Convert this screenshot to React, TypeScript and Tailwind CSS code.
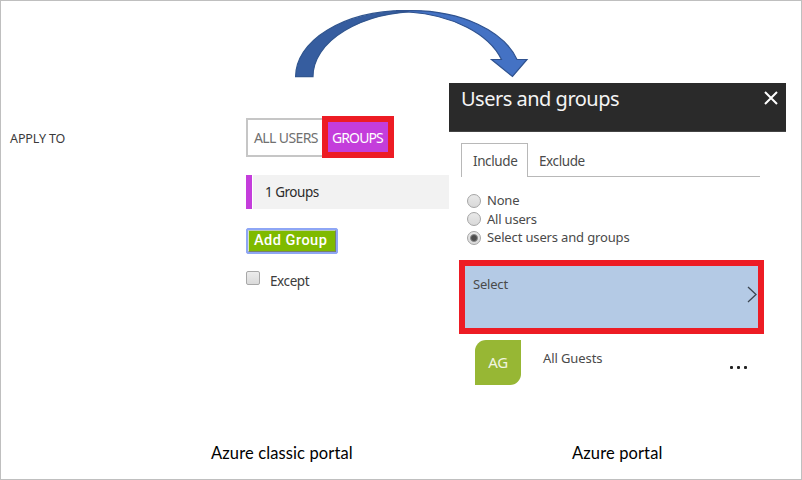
import type { ReactNode } from "react";

function SwoopArrow() {
  return (
    <svg className="block h-[82px] w-full" viewBox="0 0 800 82" fill="none">
      <g transform="translate(-1 -1)" stroke="#2f528f" strokeWidth="1.2">
        <path d="M295.6 76.6A109 66 0 0 1 404.5 10.6L422 11.4A109 65 0 0 0 313 76.6Z" fill="#365d9f" stroke="#31568f" />
        <path d="M396 10.6H412A109 67 0 0 1 517 59.5H527L512.5 76.5L491.5 59.5H501.5A109 67 0 0 0 409 12Z" fill="#4472c4" />
      </g>
    </svg>
  );
}

function Radio({ label, checked, className }: { label: string; checked?: boolean; className: string }) {
  return (
    <div className="flex h-[18.3px] items-center">
      <span className="flex size-[14px] items-center justify-center rounded-full border border-[#a5a5a5] bg-linear-to-b from-[#e9e9e9] to-[#d9d9d9]">
        {checked && <span className="size-[8px] rounded-full border border-[#8a8a8a] bg-[#4d4d4d]" />}
      </span>
      <span className={`ml-[6px] whitespace-nowrap text-[13px] text-[#4a4a4a] ${className}`}>{label}</span>
    </div>
  );
}

function Caption({ children, className }: { children: ReactNode; className: string }) {
  return (
    <div className={`whitespace-nowrap font-['Lato',sans-serif] text-[16.5px] leading-5 text-black ${className}`}>
      {children}
    </div>
  );
}

function ClassicPortal() {
  return (
    <section className="w-[203px] pt-[33px]">
      <div className="flex h-[42px] items-center">
        <div className="flex h-[39px] w-[76px] items-center border-2 border-r-0 border-[#c6c6c6] pl-[6px]">
          <span className="whitespace-nowrap text-[14px] tracking-[-0.6px] text-[#707070]">ALL USERS</span>
        </div>
        <div className="flex h-[42px] w-[72px] items-center border-[6px] border-[#ed1c24] bg-[#c43ddb] pl-[4px]">
          <span className="text-[14px] tracking-[-0.9px] text-white">GROUPS</span>
        </div>
      </div>
      <div className="mt-[17px] flex h-[34px] items-center">
        <div className="h-full w-[6px] bg-[#c43ddb]" />
        <div className="ml-px flex h-full flex-1 items-center bg-[#f2f2f2] pl-[12px] pt-px">
          <span className="text-[13.5px] tracking-[-0.5px] text-[#2c2c2c]">1 Groups</span>
        </div>
      </div>
      <div className="mt-[19px] h-[26px] w-[92px] rounded-[2px] border border-[#8ea6f5] bg-[#8ea6f5] p-px">
        <div className="flex h-full items-center border border-t-[#b9cbb0] border-r-[#76806c] border-b-[#76806c] border-l-[#d5e4c4] bg-[#7fba00] pl-[5px]">
          <span className="whitespace-nowrap font-['Roboto',sans-serif] text-[14.5px] font-medium tracking-[0.5px] text-white">
            Add Group
          </span>
        </div>
      </div>
      <div className="mt-[16px] flex items-start">
        <span className="mt-px size-[14px] rounded-[2px] border border-[#a8a8a8] bg-linear-to-b from-[#ececec] to-[#dadada]" />
        <span className="ml-[10px] mt-px text-[13.5px] leading-[20px] tracking-[-0.4px] text-[#3c3c3c]">Except</span>
      </div>
    </section>
  );
}

function AzurePortal() {
  return (
    <section className="w-[337px]">
      <header className="flex h-[49px] items-start justify-between border-b border-[#444] bg-[#2a2a2a] pl-[12px] pr-[8px]">
        <h1 className="whitespace-nowrap text-[20px] leading-[31px] tracking-[-0.5px] text-[#f4f4f4]">Users and groups</h1>
        <svg className="mt-[8px] size-[14px]" viewBox="0 0 14 14" stroke="#fff" strokeWidth="2">
          <path d="M1 1L13 13M13 1L1 13" />
        </svg>
      </header>
      <div className="ml-[12px] mt-[11px] flex h-[34px] w-[299px]">
        <div className="w-[67px] border border-b-0 border-[#b8b8b8] pl-[11px] text-[13.5px] leading-[34px] tracking-[-0.4px] text-[#4a4a4a]">
          Include
        </div>
        <div className="flex-1 border-b border-[#b8b8b8] pl-[11px] text-[13.5px] leading-[36px] tracking-[-0.4px] text-[#4a4a4a]">
          Exclude
        </div>
      </div>
      <div className="ml-[18px] mt-[15px]">
        <Radio label="None" className="tracking-[-0.2px]" />
        <Radio label="All users" className="tracking-[-0.2px]" />
        <Radio label="Select users and groups" checked className="tracking-[-0.15px]" />
      </div>
      <div className="ml-[10px] mt-[13px] flex h-[74px] w-[305px] items-start justify-between border-[6px] border-[#ed1c24] bg-[#b4cae5] pl-[8px] pr-[1px]">
        <span className="mt-[8px] text-[13px] leading-5 tracking-[-0.2px] text-[#4a4a4a]">Select</span>
        <svg className="mt-[20px] h-[17px] w-[10px]" viewBox="0 0 10 17" fill="none" stroke="#3c4652" strokeWidth="1.3">
          <path d="M1 1L9 8.5L1 16" />
        </svg>
      </div>
      <div className="ml-[26px] mt-[6px] flex h-[46px] items-start">
        <div className="flex h-[45px] w-[46px] items-center justify-center rounded-tl-[11px] rounded-br-[11px] bg-[#97b734] text-[15px] tracking-[-0.3px] text-[#f1f5e0]">
          AG
        </div>
        <span className="ml-[22px] mt-[8px] w-[187px] text-[13px] leading-5 tracking-[-0.1px] text-[#4a4a4a]">All Guests</span>
        <span className="mt-[26px] flex gap-[4px]">
          <i className="size-[3px] rounded-[1px] bg-[#222]" />
          <i className="size-[3px] rounded-[1px] bg-[#222]" />
          <i className="size-[3px] rounded-[1px] bg-[#222]" />
        </span>
      </div>
    </section>
  );
}

export default function App() {
  return (
    <main className="h-[480px] w-[802px] overflow-hidden border border-[#bfbfbf] bg-white font-['Noto_Sans',sans-serif]">
      <SwoopArrow />
      <div className="flex h-[360px]">
        <div className="w-[245px] pl-[9px] pt-[46px] text-[12.5px] leading-5 tracking-[-0.1px] text-[#3a3a3a]">APPLY TO</div>
        <ClassicPortal />
        <AzurePortal />
      </div>
      <div className="flex">
        <Caption className="ml-[210px] w-[361px] tracking-[0.12px]">Azure classic portal</Caption>
        <Caption className="tracking-[0.12px]">Azure portal</Caption>
      </div>
    </main>
  );
}
